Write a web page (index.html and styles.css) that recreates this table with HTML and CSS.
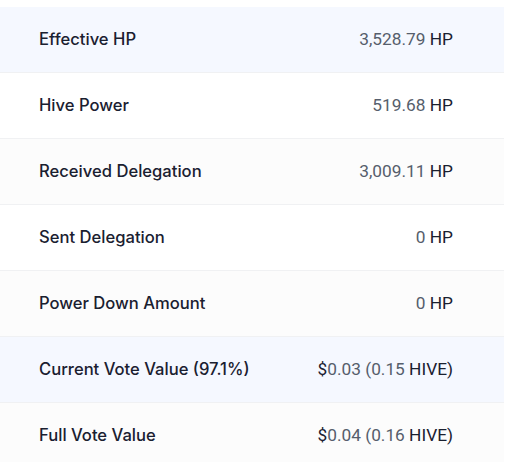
FILE: index.html
```html
<!DOCTYPE html>
<html>
<head>
<meta charset="utf-8">
<link rel="stylesheet" href="styles.css">
</head>
<body>
<div class="table">
  <div class="row hl"><span class="label">Effective HP</span><span class="value"><span class="num">3,528.79</span> HP</span></div>
  <div class="row"><span class="label">Hive Power</span><span class="value"><span class="num">519.68</span> HP</span></div>
  <div class="row alt"><span class="label">Received Delegation</span><span class="value"><span class="num">3,009.11</span> HP</span></div>
  <div class="row"><span class="label">Sent Delegation</span><span class="value"><span class="num">0</span> HP</span></div>
  <div class="row alt"><span class="label">Power Down Amount</span><span class="value"><span class="num">0</span> HP</span></div>
  <div class="row hl"><span class="label">Current Vote Value (97.1%)</span><span class="value">$<span class="num">0.03 (0.15</span> HIVE)</span></div>
  <div class="row alt"><span class="label">Full Vote Value</span><span class="value">$<span class="num">0.04 (0.16</span> HIVE)</span></div>
</div>
</body>
</html>
```

FILE: styles.css
```css
html, body {
  margin: 0;
  padding: 0;
  background: #ffffff;
}
body {
  padding-top: 7px;
}
.table {
  width: 504px;
  display: flex;
  flex-direction: column;
}
.row {
  box-sizing: border-box;
  height: 66px;
  display: flex;
  align-items: center;
  justify-content: space-between;
  padding: 0 51px 2px 39px;
  border-bottom: 1px solid #f0f1f3;
  background: #ffffff;
}
.row.alt {
  background: #fcfcfc;
}
.row.hl {
  background: #f5f8ff;
}
.label {
  font-family: Inter, "Noto Sans", sans-serif;
  font-weight: 500;
  font-size: 16.6px;
  line-height: 24px;
  color: #1a2030;
}
.value {
  font-family: Roboto, "Liberation Sans", sans-serif;
  font-size: 17.3px;
  line-height: 24px;
  color: #1a2030;
}
.num {
  color: #565e6c;
}
```
